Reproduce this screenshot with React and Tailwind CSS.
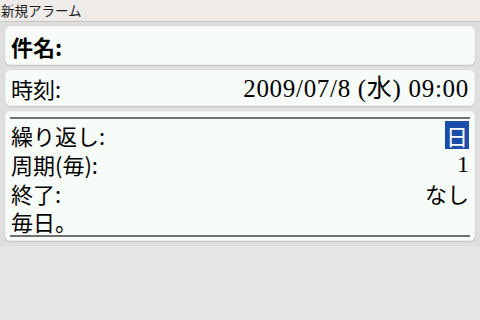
export default function App() {
  const jp = { fontFamily: '"Liberation Serif", "Noto Sans CJK JP", serif' };
  const gothic = { fontFamily: '"Noto Sans CJK JP", sans-serif' };
  return (
    <div className="w-[480px] h-[320px] bg-[#e6e6e6] flex flex-col overflow-hidden" style={jp}>
      <div className="h-[22px] bg-[#efebe9] border-b border-[#c8c4c2] flex items-center px-[1px] text-[13.5px] leading-none text-[#202020]" style={gothic}>
        新規アラーム
      </div>
      <div className="flex flex-col gap-[5px] px-[5px] pt-[4px] bg-[#dedede] pb-[5px]">
        <div className="h-[39px] rounded-[5px] bg-[#f8fcf8] border border-[#f0f0f0] shadow-[0_1px_1px_rgba(0,0,0,0.12)] flex items-center px-[5px]">
          <span className="text-[22px] font-bold text-black leading-none" style={gothic}>件名:</span>
        </div>
        <div className="h-[36px] rounded-[5px] bg-[#f8fcf8] border border-[#f0f0f0] shadow-[0_1px_1px_rgba(0,0,0,0.12)] flex items-center justify-between px-[5px]">
          <span className="text-[22px] text-black leading-none" style={gothic}>時刻:</span>
          <span className="text-[25px] tracking-[0.7px] text-black leading-none">2009/07/8 (水) 09:00</span>
        </div>
        <div className="h-[130px] rounded-[5px] bg-[#f8fcf8] border border-[#f0f0f0] shadow-[0_1px_1px_rgba(0,0,0,0.12)] flex flex-col px-[4px] pt-[5px]">
          <div className="border-t-2 border-[#707070]" />
          <div className="flex flex-col pt-[1px] px-[1px] text-[22px] leading-[24px] text-black" style={gothic}>
            <div className="h-[29px] flex items-center justify-between">
              <span>繰り返し:</span>
              <span className="bg-[#1b4ea8] text-white h-[28px] w-[24px] flex items-center justify-center">日</span>
            </div>
            <div className="h-[29px] flex items-center justify-between">
              <span>周期(毎):</span>
              <span className="text-[24px]" style={jp}>1</span>
            </div>
            <div className="h-[29px] flex items-center justify-between">
              <span>終了:</span>
              <span>なし</span>
            </div>
            <div className="h-[28px] flex items-center justify-between">
              <span>毎日。</span>
            </div>
          </div>
          <div className="border-t-2 border-[#707070]" />
        </div>
      </div>
    </div>
  );
}
